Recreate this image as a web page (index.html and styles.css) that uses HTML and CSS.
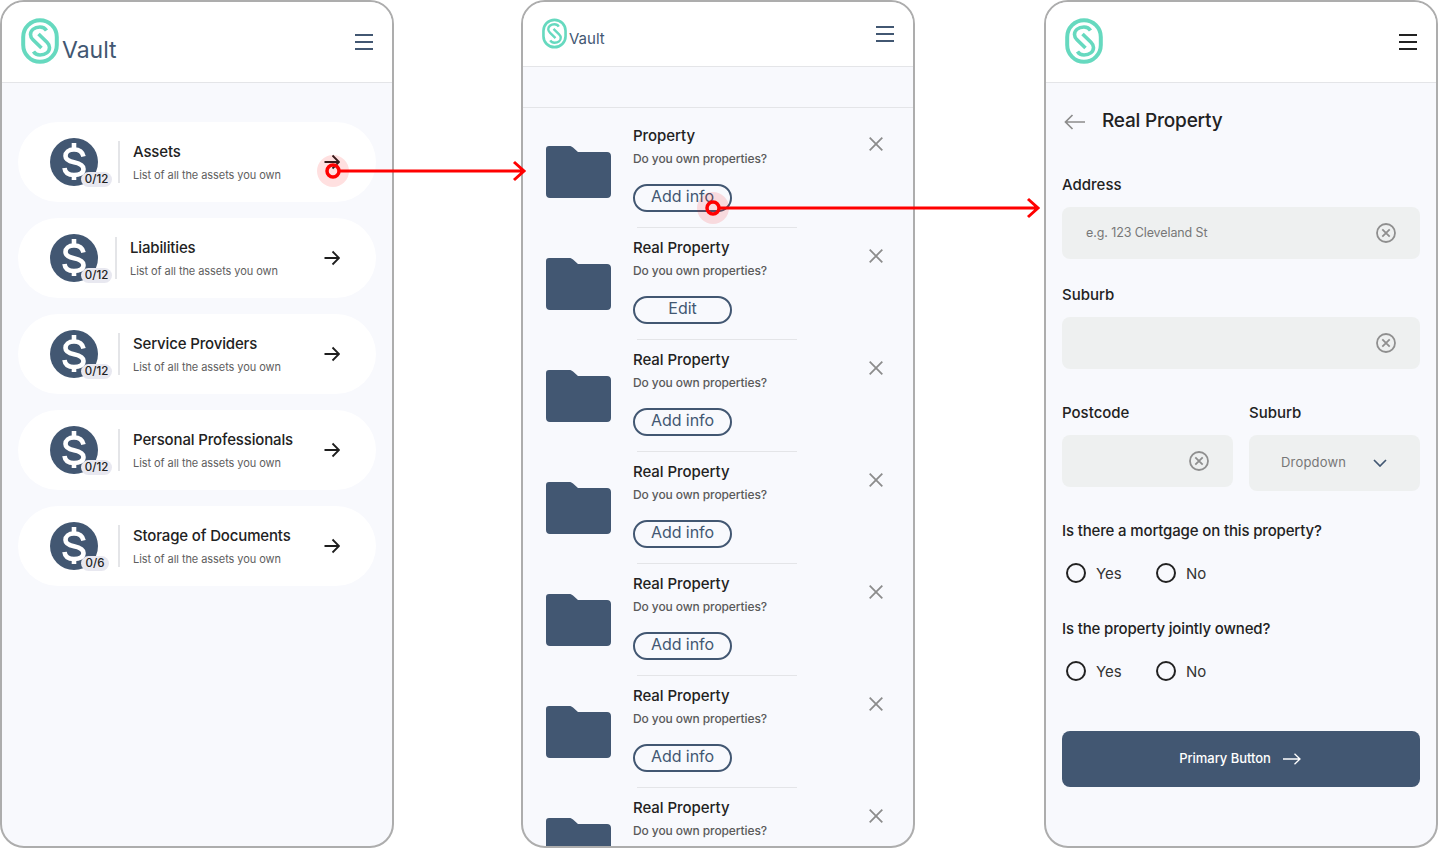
FILE: index.html
```html
<!DOCTYPE html>
<html>
<head>
    <meta name="viewport" content="width=device-width, initial-scale=1.0">
    <title>Vault flow</title>
    <link rel="stylesheet" href="styles.css">
</head>
<body>
    <svg class="defs" width="0" height="0">
        <defs>
            <symbol id="logo" viewBox="0 0 38 46">
                <rect x="2.2" y="2.2" width="33.6" height="41.6" rx="16.800" fill="none" stroke="#66d9bf" stroke-width="4"/>
                <path d="M25.500 12.500 C24 10 21.500 9 19 9 C13 9 9.500 12.500 9.500 16.500 C9.500 18.800 10.500 20.300 12 21.800 L20.500 30" fill="none" stroke="#66d9bf" stroke-width="3.600"/>
                <path d="M12.500 33.500 C14 36 16.500 37 19 37 C25 37 28.500 33.500 28.500 29.500 C28.500 27.200 27.500 25.700 26 24.200 L17.500 16" fill="none" stroke="#66d9bf" stroke-width="3.600"/>
            </symbol>
            <symbol id="dollar" viewBox="0 0 48 48">
                <circle cx="24" cy="24" r="24" fill="#425772"/>
                <path d="M33.500 18.500 C32.500 13.500 28.500 11.500 24 11.500 C18.500 11.500 15.500 14.500 15.500 18 C15.500 22 19 23.200 24 24.200 C29.500 25.300 33.500 27 33.500 31 C33.500 35 29.500 37 24 37 C18.500 37 15 34.500 14.500 30" fill="none" stroke="#fff" stroke-width="4.600"/>
                <path d="M24 5 V12 M24 36 V42" fill="none" stroke="#fff" stroke-width="4.600"/>
            </symbol>
            <symbol id="arrow" viewBox="0 0 16 16">
                <path d="M0.500 8 H15 M8.500 1.500 L15 8 L8.500 14.500" fill="none" stroke="#1e1e1e" stroke-width="1.800"/>
            </symbol>
            <symbol id="folder" viewBox="0 0 65 52">
                <path d="M3 0 H23 C25 0 26 .6 27 1.600 L32 6 H61 C63.500 6 65 7.500 65 10 V48 C65 50.500 63.500 52 61 52 H4 C1.500 52 0 50.500 0 48 V3 C0 1 1 0 3 0 Z" fill="#425772"/>
            </symbol>
            <symbol id="close" viewBox="0 0 14 14">
                <path d="M0.700 0.700 L13.300 13.300 M13.300 0.700 L0.700 13.300" fill="none" stroke="#8c8c8c" stroke-width="1.800"/>
            </symbol>
            <symbol id="clear" viewBox="0 0 20 20">
                <circle cx="10" cy="10" r="9" fill="none" stroke="#8f8f8f" stroke-width="1.800"/>
                <path d="M6.300 6.300 L13.700 13.700 M13.700 6.300 L6.300 13.700" fill="none" stroke="#8f8f8f" stroke-width="1.800"/>
            </symbol>
        </defs>
    </svg>

    <div id="canvas">
        <!-- first screen: vault categories -->
        <section class="phone">
            <header class="topbar">
                <div class="brand">
                    <svg class="logo"><use href="#logo"/></svg>
                    <span class="brand-name">Vault</span>
                </div>
                <div class="burger burger-blue"><i></i><i></i><i></i></div>
            </header>
            <div class="cat-list">
                <div class="cat-card">
                    <div class="cat-icon"><svg><use href="#dollar"/></svg><span class="badge">0/12</span></div>
                    <div class="cat-text"><h2>Assets</h2><p>List of all the assets you own</p></div>
                    <svg class="cat-arrow"><use href="#arrow"/></svg>
                </div>
                <div class="cat-card cat-tight">
                    <div class="cat-icon"><svg><use href="#dollar"/></svg><span class="badge">0/12</span></div>
                    <div class="cat-text"><h2>Liabilities</h2><p>List of all the assets you own</p></div>
                    <svg class="cat-arrow"><use href="#arrow"/></svg>
                </div>
                <div class="cat-card">
                    <div class="cat-icon"><svg><use href="#dollar"/></svg><span class="badge">0/12</span></div>
                    <div class="cat-text"><h2>Service Providers</h2><p>List of all the assets you own</p></div>
                    <svg class="cat-arrow"><use href="#arrow"/></svg>
                </div>
                <div class="cat-card">
                    <div class="cat-icon"><svg><use href="#dollar"/></svg><span class="badge">0/12</span></div>
                    <div class="cat-text"><h2>Personal Professionals</h2><p>List of all the assets you own</p></div>
                    <svg class="cat-arrow"><use href="#arrow"/></svg>
                </div>
                <div class="cat-card">
                    <div class="cat-icon"><svg><use href="#dollar"/></svg><span class="badge badge-small">0/6</span></div>
                    <div class="cat-text"><h2>Storage of Documents</h2><p>List of all the assets you own</p></div>
                    <svg class="cat-arrow"><use href="#arrow"/></svg>
                </div>
            </div>
        </section>

        <!-- second screen: property checklist -->
        <section class="phone phone-mid">
            <header class="topbar topbar-small">
                <div class="brand">
                    <svg class="logo logo-small"><use href="#logo"/></svg>
                    <span class="brand-name brand-name-small">Vault</span>
                </div>
                <div class="burger burger-blue"><i></i><i></i><i></i></div>
            </header>
            <div class="spacer"></div>
            <div class="rows">
                <div class="row">
                    <svg class="folder"><use href="#folder"/></svg>
                    <div class="row-body"><h3>Property</h3><p>Do you own properties?</p><span class="pill">Add info</span></div>
                    <svg class="row-close"><use href="#close"/></svg>
                </div>
                <div class="row">
                    <svg class="folder"><use href="#folder"/></svg>
                    <div class="row-body"><h3>Real Property</h3><p>Do you own properties?</p><span class="pill">Edit</span></div>
                    <svg class="row-close"><use href="#close"/></svg>
                </div>
                <div class="row">
                    <svg class="folder"><use href="#folder"/></svg>
                    <div class="row-body"><h3>Real Property</h3><p>Do you own properties?</p><span class="pill">Add info</span></div>
                    <svg class="row-close"><use href="#close"/></svg>
                </div>
                <div class="row">
                    <svg class="folder"><use href="#folder"/></svg>
                    <div class="row-body"><h3>Real Property</h3><p>Do you own properties?</p><span class="pill">Add info</span></div>
                    <svg class="row-close"><use href="#close"/></svg>
                </div>
                <div class="row">
                    <svg class="folder"><use href="#folder"/></svg>
                    <div class="row-body"><h3>Real Property</h3><p>Do you own properties?</p><span class="pill">Add info</span></div>
                    <svg class="row-close"><use href="#close"/></svg>
                </div>
                <div class="row">
                    <svg class="folder"><use href="#folder"/></svg>
                    <div class="row-body"><h3>Real Property</h3><p>Do you own properties?</p><span class="pill">Add info</span></div>
                    <svg class="row-close"><use href="#close"/></svg>
                </div>
                <div class="row">
                    <svg class="folder"><use href="#folder"/></svg>
                    <div class="row-body"><h3>Real Property</h3><p>Do you own properties?</p></div>
                    <svg class="row-close"><use href="#close"/></svg>
                </div>
            </div>
        </section>

        <!-- third screen: form -->
        <section class="phone phone-form">
            <header class="topbar">
                <svg class="logo"><use href="#logo"/></svg>
                <div class="burger"><i></i><i></i><i></i></div>
            </header>
            <div class="form">
                <div class="form-title">
                    <svg class="back" viewBox="0 0 22 16"><path d="M21 8 H1.500 M8.500 1 L1.500 8 L8.500 15" fill="none" stroke="#8c8c8c" stroke-width="1.700"/></svg>
                    <h1>Real Property</h1>
                </div>
                <label class="field-label first-label">Address</label>
                <div class="input"><span>e.g. 123 Cleveland St</span><svg class="clear"><use href="#clear"/></svg></div>
                <label class="field-label">Suburb</label>
                <div class="input"><span></span><svg class="clear"><use href="#clear"/></svg></div>
                <div class="split">
                    <div>
                        <label class="field-label">Postcode</label>
                        <div class="input"><span></span><svg class="clear"><use href="#clear"/></svg></div>
                    </div>
                    <div>
                        <label class="field-label">Suburb</label>
                        <div class="select">
                            <span>Dropdown</span>
                            <svg class="chevron" viewBox="0 0 14 8"><path d="M1 1 L7 7 L13 1" fill="none" stroke="#425772" stroke-width="1.700"/></svg>
                        </div>
                    </div>
                </div>
                <p class="question">Is there a mortgage on this property?</p>
                <div class="radios">
                    <span class="radio"><i></i>Yes</span>
                    <span class="radio"><i></i>No</span>
                </div>
                <p class="question question-next">Is the property jointly owned?</p>
                <div class="radios">
                    <span class="radio"><i></i>Yes</span>
                    <span class="radio"><i></i>No</span>
                </div>
                <div class="primary-btn">
                    <span>Primary Button</span>
                    <svg viewBox="0 0 18 12"><path d="M0 6 H17 M11.500 .7 L17 6 L11.500 11.300" fill="none" stroke="#fff" stroke-width="1.300"/></svg>
                </div>
            </div>
        </section>

        <!-- flow arrows over the screens -->
        <svg class="flow" viewBox="0 0 1438 848">
            <circle cx="333" cy="171" r="16" fill="#ff0000" fill-opacity="0.12"/>
            <circle cx="713" cy="208" r="16" fill="#ff0000" fill-opacity="0.12"/>
            <path d="M340 171 H523 M514 162 L524 171 L514 180" fill="none" stroke="#ff0000" stroke-width="3"/>
            <circle cx="333" cy="171" r="6" fill="none" stroke="#ff0000" stroke-width="3.500"/>
            <path d="M720 208 H1037 M1028 199 L1038 208 L1028 217" fill="none" stroke="#ff0000" stroke-width="3"/>
            <circle cx="713" cy="208" r="6" fill="none" stroke="#ff0000" stroke-width="3.500"/>
        </svg>
    </div>
</body>
</html>
```

FILE: styles.css
```css
* {
    box-sizing: border-box;
}
html, body {
    margin: 0;
    height: 848px;
    overflow: hidden;
    background-color: #fff;
}
body {
    font-family: Inter, "Noto Sans", sans-serif;
    color: #222;
}
h1, h2, h3, p {
    margin: 0;
    font-weight: 500;
}
.defs {
    display: block;
    position: absolute;
}
#canvas {
    position: relative;
    display: flex;
    width: 1438px;
    height: 848px;
}
.phone {
    width: 394px;
    height: 848px;
    flex: none;
    background-color: #f8f9fd;
    border: 2px solid #adadad;
    border-radius: 24px;
    overflow: hidden;
}
.phone-mid {
    margin-left: 127px;
}
.phone-form {
    margin-left: 129px;
}

/* top bars */
.topbar {
    display: flex;
    align-items: center;
    justify-content: space-between;
    height: 81px;
    padding: 0 19px;
    background-color: #fff;
    border-bottom: 1px solid #e4e5e8;
}
.topbar-small {
    height: 65px;
}
.brand {
    display: flex;
    align-items: flex-end;
}
.logo {
    display: block;
    width: 38px;
    height: 46px;
    margin-top: -2px;
}
.logo-small {
    width: 25px;
    height: 31px;
}
.brand-name {
    margin-left: 3px;
    font-size: 23px;
    line-height: 28px;
    color: #425772;
}
.brand-name-small {
    margin-left: 2px;
    font-size: 15px;
    line-height: 20px;
}
.burger {
    display: flex;
    flex-direction: column;
    gap: 5px;
    width: 18px;
}
.burger i {
    display: block;
    height: 2px;
    background-color: #222;
}
.burger-blue i {
    background-color: #425772;
}

/* category cards */
.cat-list {
    display: flex;
    flex-direction: column;
    gap: 16px;
    padding: 39px 16px 0;
}
.cat-card {
    display: flex;
    align-items: center;
    height: 80px;
    padding: 0 36px 0 32px;
    background-color: #fff;
    border-radius: 40px;
}
.cat-icon {
    position: relative;
    width: 48px;
    height: 48px;
    flex: none;
}
.cat-icon svg {
    display: block;
    width: 48px;
    height: 48px;
}
.badge {
    position: absolute;
    left: 31px;
    top: 34px;
    width: 31px;
    height: 15px;
    border-radius: 8px;
    background-color: #e8e8f0;
    font-size: 11.500px;
    font-weight: 500;
    line-height: 15px;
    text-align: center;
    color: #222;
}
.badge-small {
    width: 28px;
}
.cat-text {
    flex: 1;
    height: 42px;
    margin-left: 20px;
    padding-left: 13px;
    border-left: 2px solid #e4e5e8;
}
.cat-tight .cat-text {
    margin-left: 17px;
}
.cat-text h2 {
    margin-top: 1px;
    font-size: 15px;
    line-height: 20px;
    letter-spacing: -0.150px;
}
.cat-text p {
    margin-top: 5px;
    font-size: 11px;
    line-height: 16px;
    font-weight: 400;
    letter-spacing: -0.070px;
    color: #5e5e5e;
}
.cat-arrow {
    width: 16px;
    height: 16px;
    flex: none;
}

/* property rows */
.spacer {
    height: 41px;
    border-bottom: 1px solid #e4e5e8;
}
.row {
    position: relative;
    display: flex;
    height: 112px;
    padding: 0 0 0 23px;
}
.folder {
    width: 65px;
    height: 52px;
    flex: none;
    margin-top: 38px;
}
.row-body {
    margin-left: 22px;
    padding-top: 18px;
}
.row-body h3 {
    font-size: 15px;
    line-height: 20px;
    letter-spacing: -0.050px;
}
.row-body p {
    margin-top: 5px;
    font-size: 12px;
    line-height: 16px;
    letter-spacing: -0.100px;
    color: #5a5a5a;
}
.pill {
    display: block;
    width: 99px;
    height: 28px;
    margin-top: 17px;
    border: 2px solid #425772;
    border-radius: 14px;
    font-size: 16px;
    line-height: 20px;
    text-align: center;
    letter-spacing: -0.050px;
    color: #425772;
}
.row-close {
    position: absolute;
    left: 346px;
    top: 29px;
    width: 14px;
    height: 14px;
}
.row::after {
    content: "";
    position: absolute;
    left: 114px;
    top: 119px;
    width: 160px;
    height: 1px;
    background-color: #e4e5e8;
}
.row:last-child::after {
    display: none;
}

/* form */
.form {
    padding: 0 16px;
}
.form-title {
    display: flex;
    align-items: center;
    height: 76px;
}
.back {
    width: 22px;
    height: 16px;
    margin-left: 2px;
    margin-top: 2px;
}
.form-title h1 {
    margin-left: 16px;
    font-size: 19px;
    line-height: 24px;
    letter-spacing: -0.200px;
}
.field-label {
    display: block;
    height: 20px;
    font-size: 15px;
    font-weight: 500;
    line-height: 22px;
}
.first-label {
    margin-top: 15px;
    margin-bottom: 13px;
}
.input {
    display: flex;
    align-items: center;
    justify-content: space-between;
    height: 52px;
    padding: 0 24px;
    background-color: #eef0f0;
    border-radius: 8px;
    font-size: 12.500px;
    letter-spacing: -0.100px;
    color: #777;
}
.input span {
    padding-bottom: 2px;
}
.input + .field-label {
    margin-top: 25px;
    margin-bottom: 13px;
}
.clear {
    width: 20px;
    height: 20px;
    flex: none;
}
.split {
    display: grid;
    grid-template-columns: 171px 171px;
    gap: 16px;
    margin-top: 33px;
}
.split .field-label {
    margin: 0 0 13px;
}
.split .input {
    padding-right: 24px;
}
.select {
    display: flex;
    align-items: center;
    justify-content: space-between;
    height: 56px;
    padding: 0 33px 0 32px;
    background-color: #eef0f0;
    border-radius: 8px;
    font-size: 13px;
    letter-spacing: 0.200px;
    color: #777;
}
.select span {
    padding-bottom: 2px;
}
.chevron {
    width: 14px;
    height: 8px;
}
.question {
    margin-top: 30px;
    font-size: 15px;
    line-height: 20px;
    letter-spacing: -0.150px;
}
.question-next {
    margin-top: 36px;
}
.radios {
    display: flex;
    gap: 34px;
    margin-top: 22px;
    padding-left: 4px;
    height: 20px;
}
.radio {
    display: flex;
    align-items: center;
    gap: 10px;
    width: 56px;
    font-size: 15px;
    font-weight: 400;
    color: #333;
}
.radio i {
    display: block;
    width: 20px;
    height: 20px;
    border: 2px solid #222;
    border-radius: 50%;
}
.primary-btn {
    display: flex;
    align-items: center;
    justify-content: center;
    gap: 12px;
    height: 56px;
    margin-top: 50px;
    padding-right: 2px;
    background-color: #425772;
    border-radius: 8px;
    font-size: 13px;
    font-weight: 500;
    letter-spacing: -0.050px;
    color: #fff;
}
.primary-btn span {
    padding-bottom: 3px;
}
.primary-btn svg {
    width: 18px;
    height: 12px;
}

/* flow overlay */
.flow {
    position: absolute;
    left: 0;
    top: 0;
    width: 1438px;
    height: 848px;
    pointer-events: none;
}
```
